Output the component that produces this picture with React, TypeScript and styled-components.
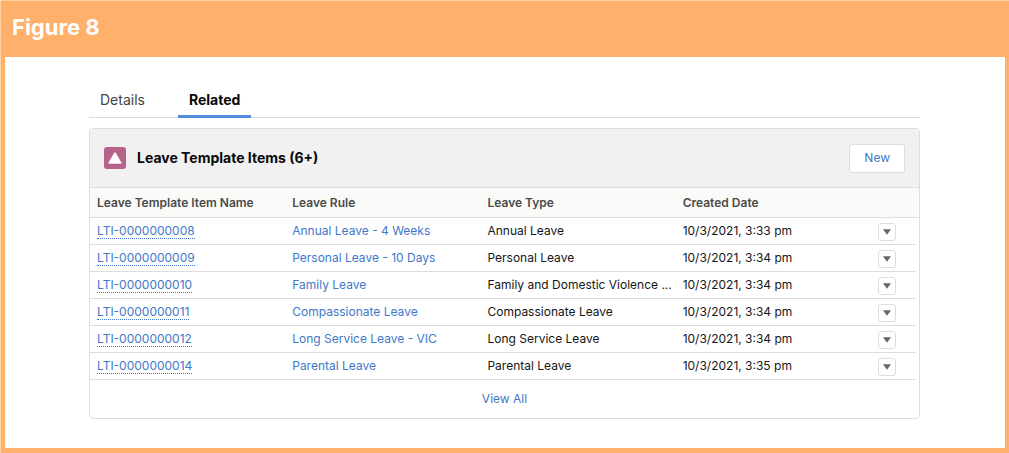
import React from "react";
import styled, { createGlobalStyle } from "styled-components";

const colors = {
  orange: "#ffb06b",
  edge: "#ffd3a3",
  link: "#3f78c9",
  line: "#dddddd",
  text: "#161616",
  muted: "#4b4b4b",
};

const GlobalStyle = createGlobalStyle`
  *, *::before, *::after { box-sizing: border-box; }
  body {
    margin: 0;
    background: #ffffff;
    color: ${colors.text};
    font-family: Inter, "Liberation Sans", sans-serif;
    font-size: 12px;
    line-height: 16px;
  }
`;

const Figure = styled.figure`
  display: flex;
  flex-direction: column;
  min-height: 100vh;
  margin: 0;
  border: 1px solid ${colors.edge};
  border-right: 0;
  border-bottom: 0;
  background: ${colors.orange};
`;

const Caption = styled.figcaption`
  height: 56px;
  padding: 12px 11px;
  color: #ffffff;
  font-size: 22px;
  font-weight: 700;
  line-height: 28px;
`;

const Content = styled.main`
  flex: 1;
  margin: 0 4px 5px;
  padding: 26px 85px 28px 84px;
  background: #ffffff;
`;

const Tabs = styled.div`
  display: flex;
  gap: 22px;
  margin-bottom: 10px;
  border-bottom: 1px solid ${colors.line};
`;

const Tab = styled.button<{ $active?: boolean }>`
  height: 35px;
  margin-bottom: -1px;
  padding: 2px 11px 0;
  border: 0;
  border-bottom: 3px solid ${(p) => (p.$active ? "#4f8ce0" : "transparent")};
  background: none;
  color: ${(p) => (p.$active ? "#080808" : "#444444")};
  font: ${(p) => (p.$active ? 700 : 400)} 14px/20px Inter, sans-serif;
`;

const Card = styled.section`
  overflow: hidden;
  border: 1px solid ${colors.line};
  border-radius: 4px;
`;

const CardHeader = styled.header`
  display: flex;
  align-items: center;
  height: 59px;
  padding: 0 14px;
  border-bottom: 1px solid ${colors.line};
  background: #f1f1f1;
`;

const ObjectIcon = styled.svg`
  width: 22px;
  height: 22px;
`;

const CardTitle = styled.h2`
  flex: 1;
  margin: 0 0 0 11px;
  color: #080808;
  font-size: 14px;
  font-weight: 700;
  line-height: 20px;
`;

const NewButton = styled.button`
  height: 29px;
  padding: 0 14px;
  border: 1px solid ${colors.line};
  border-radius: 3px;
  background: #ffffff;
  color: ${colors.link};
  font: 400 12px/16px Inter, sans-serif;
`;

const Table = styled.table`
  width: 100%;
  border-collapse: separate;
  border-spacing: 0;
  table-layout: fixed;
`;

const HeadCell = styled.th<{ $width: string }>`
  width: ${(p) => p.$width};
  height: 30px;
  padding: 0 7px;
  border-bottom: 1px solid ${colors.line};
  background: #fafaf9;
  color: ${colors.muted};
  font-weight: 600;
  text-align: left;
  white-space: nowrap;
`;

const Cell = styled.td`
  height: 27px;
  padding: 0 0 0 7px;
  border-bottom: 1px solid ${colors.line};
  overflow: hidden;
  text-overflow: ellipsis;
  white-space: nowrap;
`;

const ActionCell = styled.td`
  padding: 0 0 0 7px;
  background: linear-gradient(${colors.line}, ${colors.line}) left bottom /
    calc(100% - 3px) 1px no-repeat;
`;

const Link = styled.a`
  color: ${colors.link};
  text-decoration: none;
`;

const RecordLink = styled(Link)`
  display: inline-block;
  height: 16px;
  border-bottom: 1px dotted ${colors.link};
`;

const MenuButton = styled.button`
  display: flex;
  align-items: center;
  justify-content: center;
  width: 18px;
  height: 18px;
  padding: 0;
  border: 1px solid ${colors.line};
  border-radius: 3px;
  background: #ffffff;
`;

const CardFooter = styled.footer`
  display: flex;
  justify-content: center;
  padding: 11px 0;
`;

const columns = [
  { label: "Leave Template Item Name", width: "23.55%" },
  { label: "Leave Rule", width: "23.55%" },
  { label: "Leave Type", width: "23.55%" },
  { label: "Created Date", width: "23.55%" },
];

const items = [
  ["LTI-0000000008", "Annual Leave - 4 Weeks", "Annual Leave", "10/3/2021, 3:33 pm"],
  ["LTI-0000000009", "Personal Leave - 10 Days", "Personal Leave", "10/3/2021, 3:34 pm"],
  ["LTI-0000000010", "Family Leave", "Family and Domestic Violence ...", "10/3/2021, 3:34 pm"],
  ["LTI-0000000011", "Compassionate Leave", "Compassionate Leave", "10/3/2021, 3:34 pm"],
  ["LTI-0000000012", "Long Service Leave - VIC", "Long Service Leave", "10/3/2021, 3:34 pm"],
  ["LTI-0000000014", "Parental Leave", "Parental Leave", "10/3/2021, 3:35 pm"],
];

export default function App() {
  return (
    <>
      <GlobalStyle />
      <Figure>
        <Caption>Figure 8</Caption>
        <Content>
          <Tabs role="tablist">
            <Tab role="tab" aria-selected={false}>Details</Tab>
            <Tab role="tab" aria-selected $active>Related</Tab>
          </Tabs>
          <Card>
            <CardHeader>
              <ObjectIcon viewBox="0 0 22 22" aria-hidden="true">
                <rect width="22" height="22" rx="3" fill="#b5638b" />
                <path
                  d="M10.4 5.6 4.6 15.4Q4 16.8 5.4 16.8H16.6Q18 16.8 17.4 15.4L11.6 5.6Q11 4.8 10.4 5.6Z"
                  fill="#ffffff"
                />
              </ObjectIcon>
              <CardTitle>Leave Template Items (6+)</CardTitle>
              <NewButton>New</NewButton>
            </CardHeader>
            <Table>
              <thead>
                <tr>
                  {columns.map((c) => (
                    <HeadCell key={c.label} $width={c.width} scope="col">
                      {c.label}
                    </HeadCell>
                  ))}
                  <HeadCell $width="auto" scope="col" aria-label="Actions" />
                </tr>
              </thead>
              <tbody>
                {items.map(([name, rule, type, created]) => (
                  <tr key={name}>
                    <Cell><RecordLink href="#">{name}</RecordLink></Cell>
                    <Cell><Link href="#">{rule}</Link></Cell>
                    <Cell>{type}</Cell>
                    <Cell>{created}</Cell>
                    <ActionCell>
                      <MenuButton aria-label={`Actions for ${name}`}>
                        <svg width="10" height="6" viewBox="0 0 10 6" aria-hidden="true">
                          <path d="M1 0.2H9L5 5.8Z" fill="#666666" />
                        </svg>
                      </MenuButton>
                    </ActionCell>
                  </tr>
                ))}
              </tbody>
            </Table>
            <CardFooter>
              <Link href="#">View All</Link>
            </CardFooter>
          </Card>
        </Content>
      </Figure>
    </>
  );
}
